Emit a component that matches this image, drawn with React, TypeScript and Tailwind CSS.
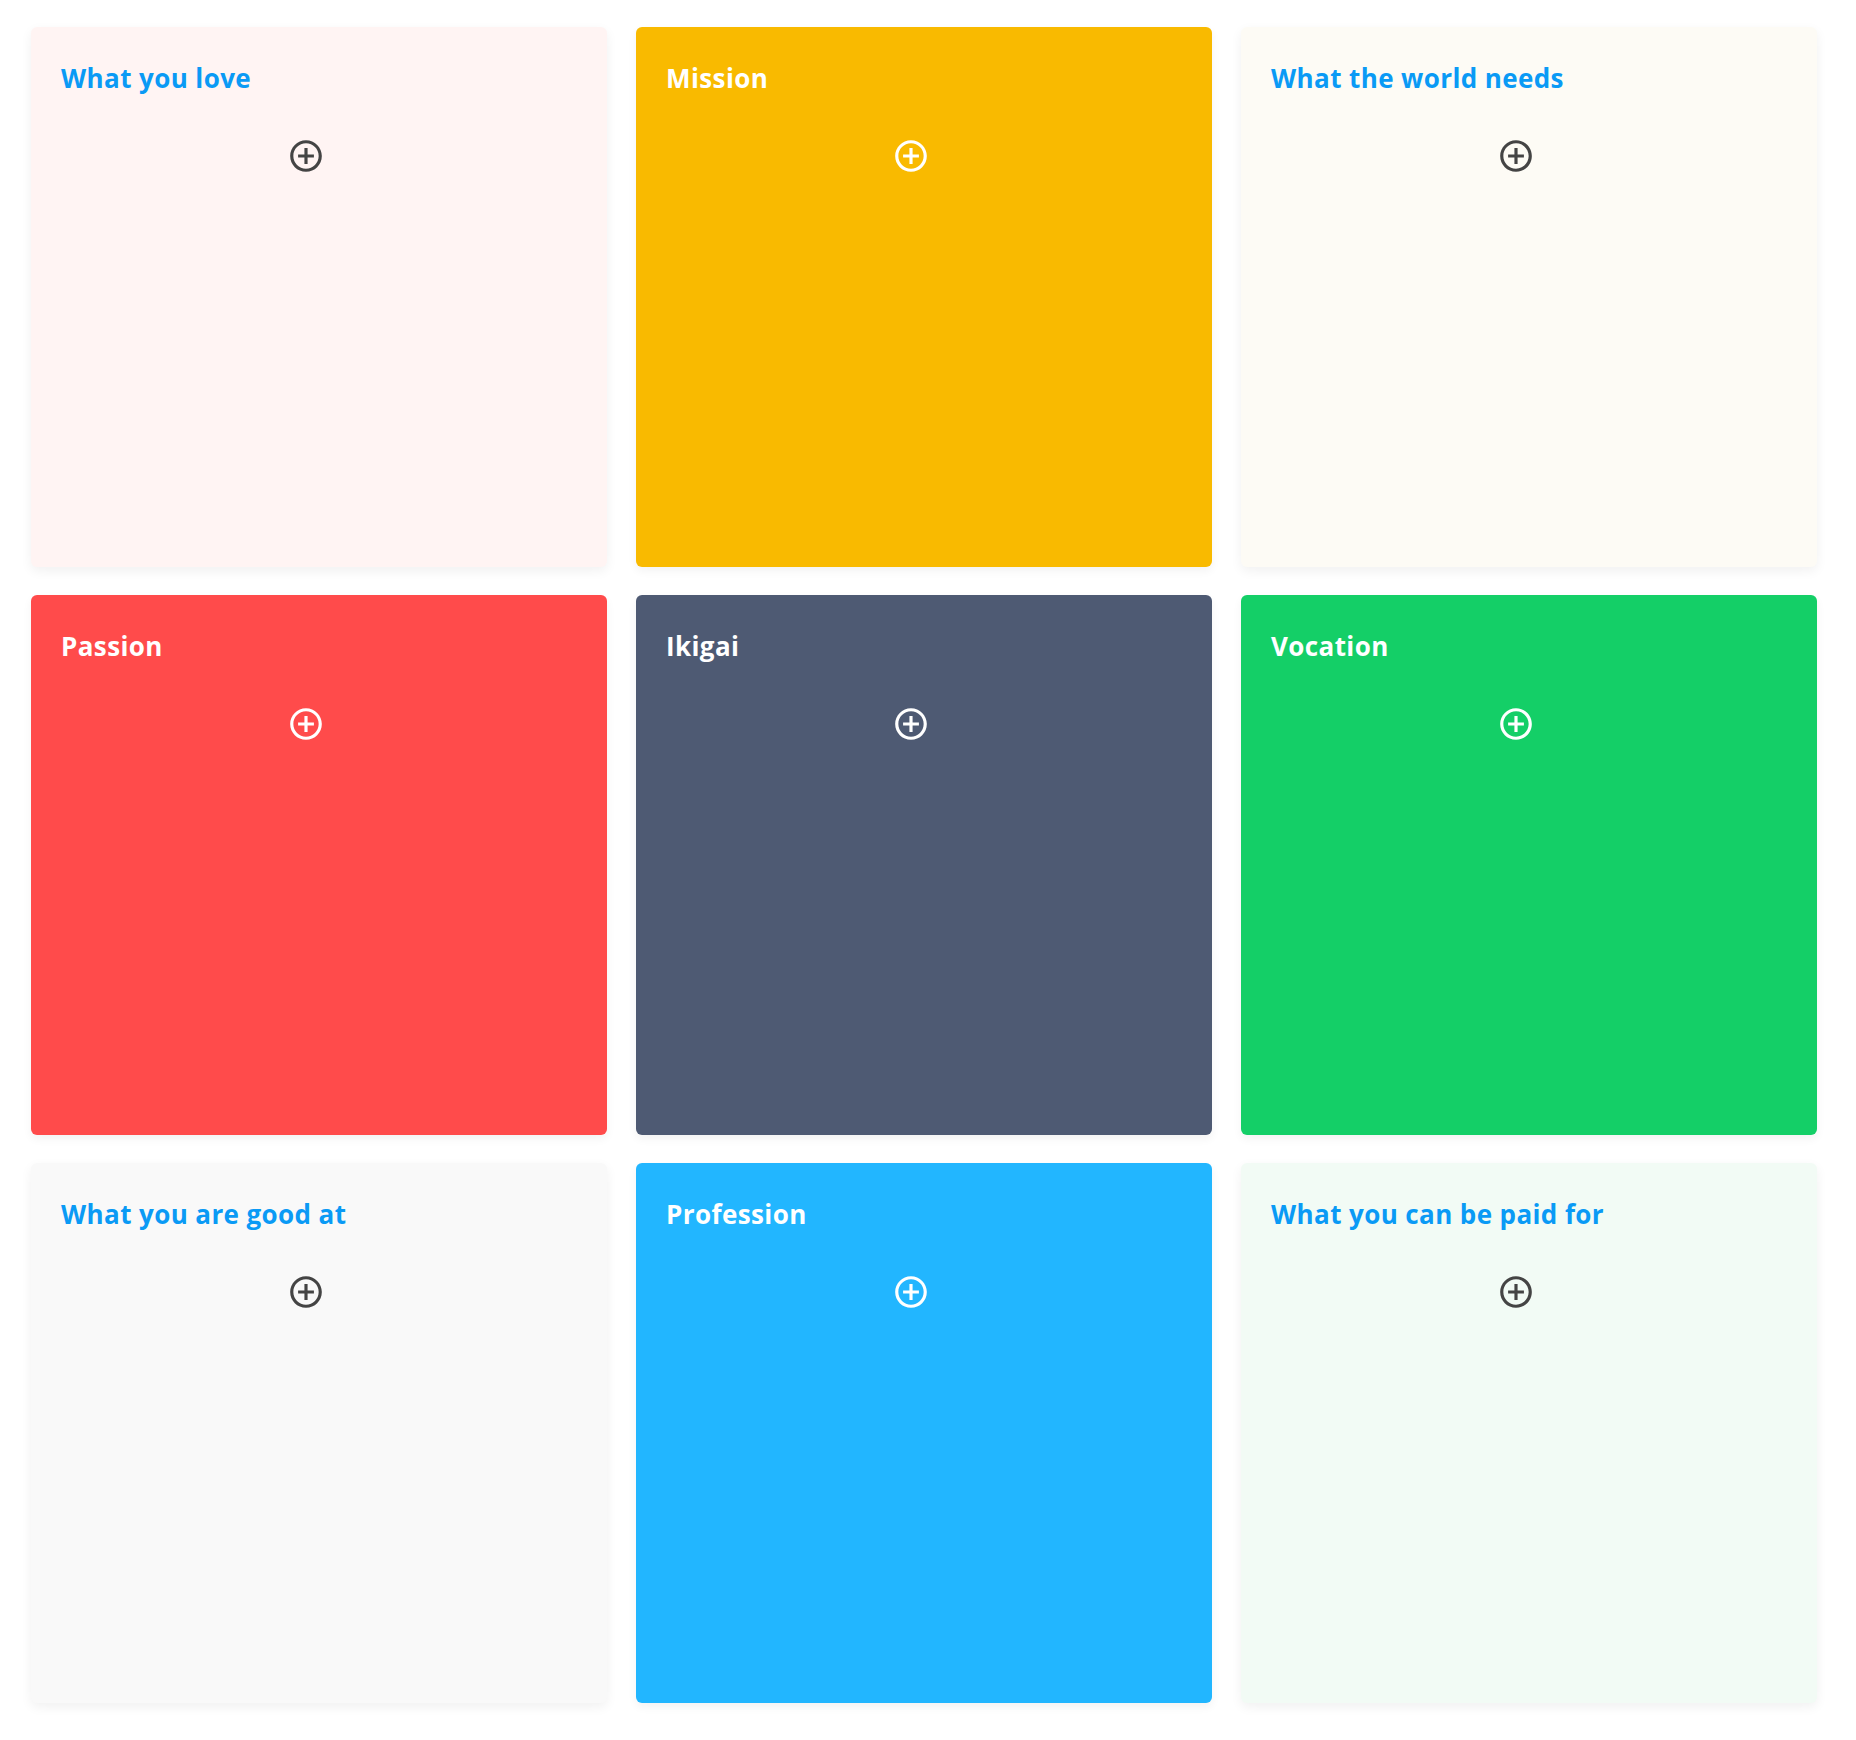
import { MdAddCircleOutline } from 'react-icons/md';

export default function App() {
  const cards = [
    { title: 'What you love', bg: 'bg-[#fff4f3]', text: 'text-[#0a9af5]', icon: 'text-[#444444]', light: true },
    { title: 'Mission', bg: 'bg-[#f9ba00]', text: 'text-white', icon: 'text-white', light: false },
    { title: 'What the world needs', bg: 'bg-[#fdfbf5]', text: 'text-[#0a9af5]', icon: 'text-[#444444]', light: true },
    { title: 'Passion', bg: 'bg-[#ff4b4b]', text: 'text-white', icon: 'text-white', light: false },
    { title: 'Ikigai', bg: 'bg-[#4e5a73]', text: 'text-white', icon: 'text-white', light: false },
    { title: 'Vocation', bg: 'bg-[#14cf67]', text: 'text-white', icon: 'text-white', light: false },
    { title: 'What you are good at', bg: 'bg-[#f9f9f9]', text: 'text-[#0a9af5]', icon: 'text-[#444444]', light: true },
    { title: 'Profession', bg: 'bg-[#22b6ff]', text: 'text-white', icon: 'text-white', light: false },
    { title: 'What you can be paid for', bg: 'bg-[#f2fbf5]', text: 'text-[#0a9af5]', icon: 'text-[#444444]', light: true }
  ];

  return (
    <div className="min-h-screen bg-white pl-[31px] pr-[39px] pt-[27px] pb-[36px] font-['Open_Sans',sans-serif]">
      <div className="grid grid-cols-3 gap-x-[29px] gap-y-[28px]">
        {cards.map((card, idx) => (
          <div
            key={idx}
            className={`h-[540px] rounded-md px-[30px] pt-[34px] ${card.bg} ${card.light ? 'shadow-[0_4px_12px_rgba(0,0,0,0.06)]' : 'shadow-[0_4px_10px_rgba(0,0,0,0.05)]'}`}
          >
            <h3 className={`text-[26px] leading-[34px] font-bold tracking-[0.4px] ${card.text}`}>{card.title}</h3>
            <div className="flex justify-center pr-[27px] mt-[42px]">
              <MdAddCircleOutline size={38} className={card.icon} />
            </div>
          </div>
        ))}
      </div>
    </div>
  );
}
